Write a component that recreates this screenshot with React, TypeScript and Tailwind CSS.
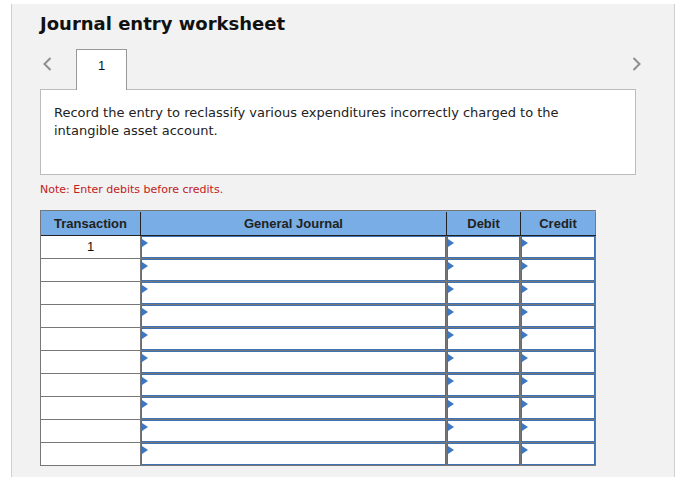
import React from 'react';

const ROWS = 10;

function Flag() {
  return (
    <svg className="absolute left-0 top-[2px]" width="6" height="8" viewBox="0 0 6 8">
      <polygon points="0,0 6,4 0,8" fill="#3f78c2" />
    </svg>
  );
}

function InputCell({ width }: { width: string }) {
  return (
    <div className={`${width} h-full border-r border-b border-[#777] bg-white`}>
      <div className="relative h-full border border-[#3d72b4]">
        <Flag />
      </div>
    </div>
  );
}

function Chevron({ dir }: { dir: 'left' | 'right' }) {
  return (
    <svg width="9" height="14" viewBox="0 0 9 14" className="mt-[8px]">
      <polyline
        points={dir === 'left' ? '7.5,1 1.5,7 7.5,13' : '1.5,1 7.5,7 1.5,13'}
        fill="none"
        stroke="#8e8e8e"
        strokeWidth="2"
      />
    </svg>
  );
}

export default function App() {
  return (
    <div className="min-h-screen bg-white font-['DejaVu_Sans',Verdana,sans-serif] text-[#222]">
      <div className="ml-[11px] mt-[4px] h-[473px] w-[664px] border-x border-[#cfcfcf] bg-[#f2f2f2] pl-[28px] pt-[9px]">
        <h1 className="text-[18px] font-bold leading-[22px] text-[#111]">Journal entry worksheet</h1>

        <div className="mt-[14px] flex h-[40px] w-[605px] items-start">
          <div className="ml-[3px]">
            <Chevron dir="left" />
          </div>
          <div className="relative z-10 ml-[24px] h-[41px] w-[51px] border border-b-0 border-[#999] bg-white pt-[8px] text-center font-['Liberation_Sans',Arial,sans-serif] text-[13px] leading-[16px] text-[#111]">
            1
          </div>
          <div className="ml-auto mr-[4px]">
            <Chevron dir="right" />
          </div>
        </div>

        <div className="h-[86px] w-[596px] border border-[#bcbcbc] bg-white px-[13px] pt-[14px] text-[13px] leading-[18px]">
          Record the entry to reclassify various expenditures incorrectly charged to the intangible asset account.
        </div>

        <p className="mt-[7px] text-[11px] leading-[16px] text-[#c0211c]">Note: Enter debits before credits.</p>

        <div className="mt-[12px] w-[556px] border-l border-[#777] font-['Liberation_Sans',Arial,sans-serif]">
          <div className="flex h-[26px] border-t border-b border-t-[#777] border-b-[#222] bg-[#78ade5] pt-px text-[13px] font-bold leading-[23px] text-[#222]">
            <div className="w-[100px] border-r border-[#222] text-center">Transaction</div>
            <div className="w-[306px] border-r border-[#222] text-center">General Journal</div>
            <div className="w-[74px] border-r border-[#222] text-center">Debit</div>
            <div className="w-[75px] border-r border-[#777] text-center">Credit</div>
          </div>
          {Array.from({ length: ROWS }).map((_, i) => (
            <div key={i} className="flex h-[23px]">
              <div className="w-[100px] border-r border-b border-[#777] bg-white text-center text-[13px] leading-[22px] text-[#111]">
                {i === 0 ? '1' : ''}
              </div>
              <InputCell width="w-[306px]" />
              <InputCell width="w-[74px]" />
              <InputCell width="w-[75px]" />
            </div>
          ))}
        </div>
      </div>
    </div>
  );
}
